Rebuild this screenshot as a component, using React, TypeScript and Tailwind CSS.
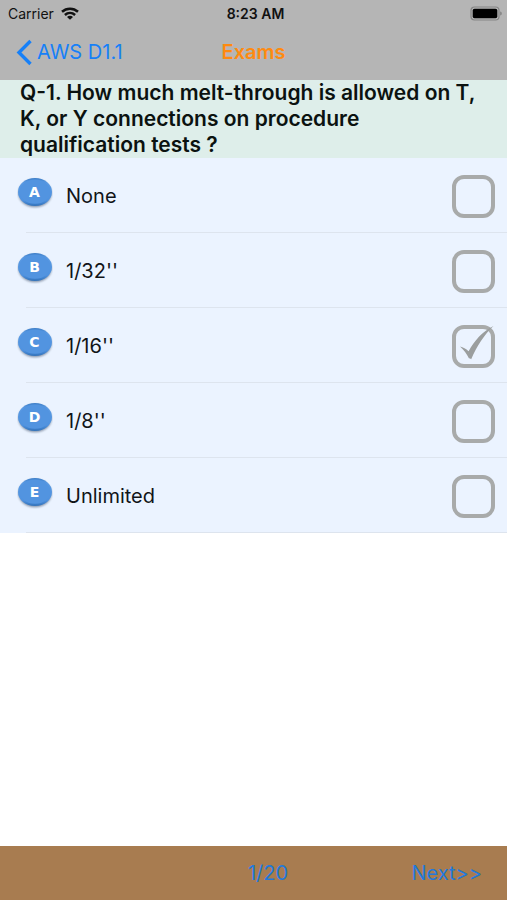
import { useState } from "react";

const options = [
  { letter: "A", text: "None" },
  { letter: "B", text: "1/32''" },
  { letter: "C", text: "1/16''" },
  { letter: "D", text: "1/8''" },
  { letter: "E", text: "Unlimited" },
];

function WifiIcon() {
  return (
    <svg aria-hidden="true" viewBox="0 0 18 13" className="h-[13px] w-[18px]">
      <g fill="none" stroke="#111" strokeWidth="2.5">
        <path d="M1 4.8C5.6.7 12.4.7 17 4.8" />
        <path d="M3.9 8c3-2.7 7.2-2.7 10.2 0" />
      </g>
      <path d="M9 12.8 6 9.9c1.7-1.5 4.3-1.5 6 0z" fill="#111" />
    </svg>
  );
}

function BatteryIcon() {
  return (
    <svg aria-hidden="true" viewBox="0 0 33 16" className="h-4 w-[33px]">
      <rect x="1" y="1" width="28" height="13" rx="3.5" fill="none" stroke="#858585" strokeWidth="1.2" />
      <rect x="2.7" y="2.7" width="24.6" height="9.6" rx="1.8" fill="#000" />
      <path d="M30.3 5.5c1.8.5 1.8 3.5 0 4z" fill="#777" />
    </svg>
  );
}

function StatusBar() {
  return (
    <div className="grid h-[27px] grid-cols-3 items-center pr-1 pl-2 text-[#111]">
      <div className="flex items-center gap-[7px] text-sm">
        <span>Carrier</span>
        <WifiIcon />
      </div>
      <div className="text-center text-sm font-semibold">8:23 AM</div>
      <div className="flex justify-end">
        <BatteryIcon />
      </div>
    </div>
  );
}

function NavBar() {
  return (
    <nav className="grid h-[53px] grid-cols-3 items-center pb-[3px] pl-4 text-xl leading-6">
      <a href="#exams" className="flex items-center gap-1 whitespace-nowrap text-[#1680f8]">
        <svg aria-hidden="true" viewBox="0 0 17 27" className="h-[27px] w-[17px]">
          <path d="M14.5 2 3 13.5 14.5 25" fill="none" stroke="currentColor" strokeWidth="3.4" />
        </svg>
        AWS D1.1
      </a>
      <h1 className="pr-4 text-center font-semibold text-[#ff8a0f]">Exams</h1>
    </nav>
  );
}

function LetterBadge({ letter }: { letter: string }) {
  return (
    <svg aria-hidden="true" viewBox="0 0 36 32" className="h-8 w-9">
      <defs>
        <linearGradient id={"face" + letter} x1="0" y1="0" x2="0" y2="1">
          <stop offset="0" stopColor="#3d7ec8" />
          <stop offset=".18" stopColor="#5a9ae3" />
          <stop offset=".8" stopColor="#4f92df" />
          <stop offset="1" stopColor="#3272ba" />
        </linearGradient>
        <filter id={"shade" + letter} x="-10%" y="-10%" width="120%" height="130%">
          <feGaussianBlur stdDeviation="0.8" />
        </filter>
      </defs>
      <ellipse cx="18" cy="16.4" rx="16.6" ry="13.8" fill="#65758c" opacity=".75" filter={"url(#shade" + letter + ")"} />
      <ellipse cx="18" cy="15" rx="17" ry="14" fill={"url(#face" + letter + ")"} />
      <ellipse cx="18" cy="14.6" rx="15.4" ry="12.2" fill="#5294e0" />
      <text x="17.5" y="20" textAnchor="middle" fill="#fff" fontSize="14" fontWeight="700" fontFamily="DejaVu Sans, sans-serif">
        {letter}
      </text>
    </svg>
  );
}

export default function App() {
  const [selected, setSelected] = useState("C");

  return (
    <div className="flex min-h-screen flex-col bg-white font-['Inter','Liberation_Sans',sans-serif] text-[#111418]">
      <header className="bg-[#b5b5b5]">
        <StatusBar />
        <NavBar />
      </header>

      <main className="flex-1">
        <h2 className="bg-[#deeeea] px-5 text-[21px] leading-[26px] font-semibold text-[#0b1210]">
          Q-1. How much melt-through is allowed on T, K, or Y connections on procedure qualification tests ?
        </h2>
        <ul>
          {options.map(({ letter, text }) => (
            <li key={letter} className="bg-[#ebf3ff]">
              <label className="flex h-[74px] items-center pt-0.5 pr-3 pl-[17px] text-xl">
                <span className="pb-1.5">
                  <LetterBadge letter={letter} />
                </span>
                <span className="flex-1 pl-[13px]">{text}</span>
                <span className="grid size-[43px]">
                  <input
                    type="checkbox"
                    checked={selected === letter}
                    onChange={() => setSelected(selected === letter ? "" : letter)}
                    className="peer col-start-1 row-start-1 size-[43px] appearance-none rounded-xl border-4 border-[#a8aaaa]"
                  />
                  <svg
                    aria-hidden="true"
                    viewBox="0 0 43 43"
                    className="pointer-events-none invisible col-start-1 row-start-1 size-[43px] peer-checked:visible"
                  >
                    <path d="M8 21.6c3.2.6 6 2.2 8.6 4.6C22.6 15.4 30.5 6.5 41.5 1 32.5 9.5 25 20.5 19.2 34.2c-.7-.7-1.5-.9-2.3-.9C14.6 28.8 12 25 8 21.6z" fill="#9b9e9e" />
                  </svg>
                </span>
              </label>
              <div className="ml-[26px] h-px bg-[#dde4ee]" />
            </li>
          ))}
        </ul>
      </main>

      <footer className="grid h-[54px] grid-cols-3 items-center bg-[#a87c50] pr-[25px] pl-[54px] text-xl text-[#2279dc]">
        <span className="col-start-2 text-center">1/20</span>
        <button type="button" className="justify-self-end">
          Next&gt;&gt;
        </button>
      </footer>
    </div>
  );
}
